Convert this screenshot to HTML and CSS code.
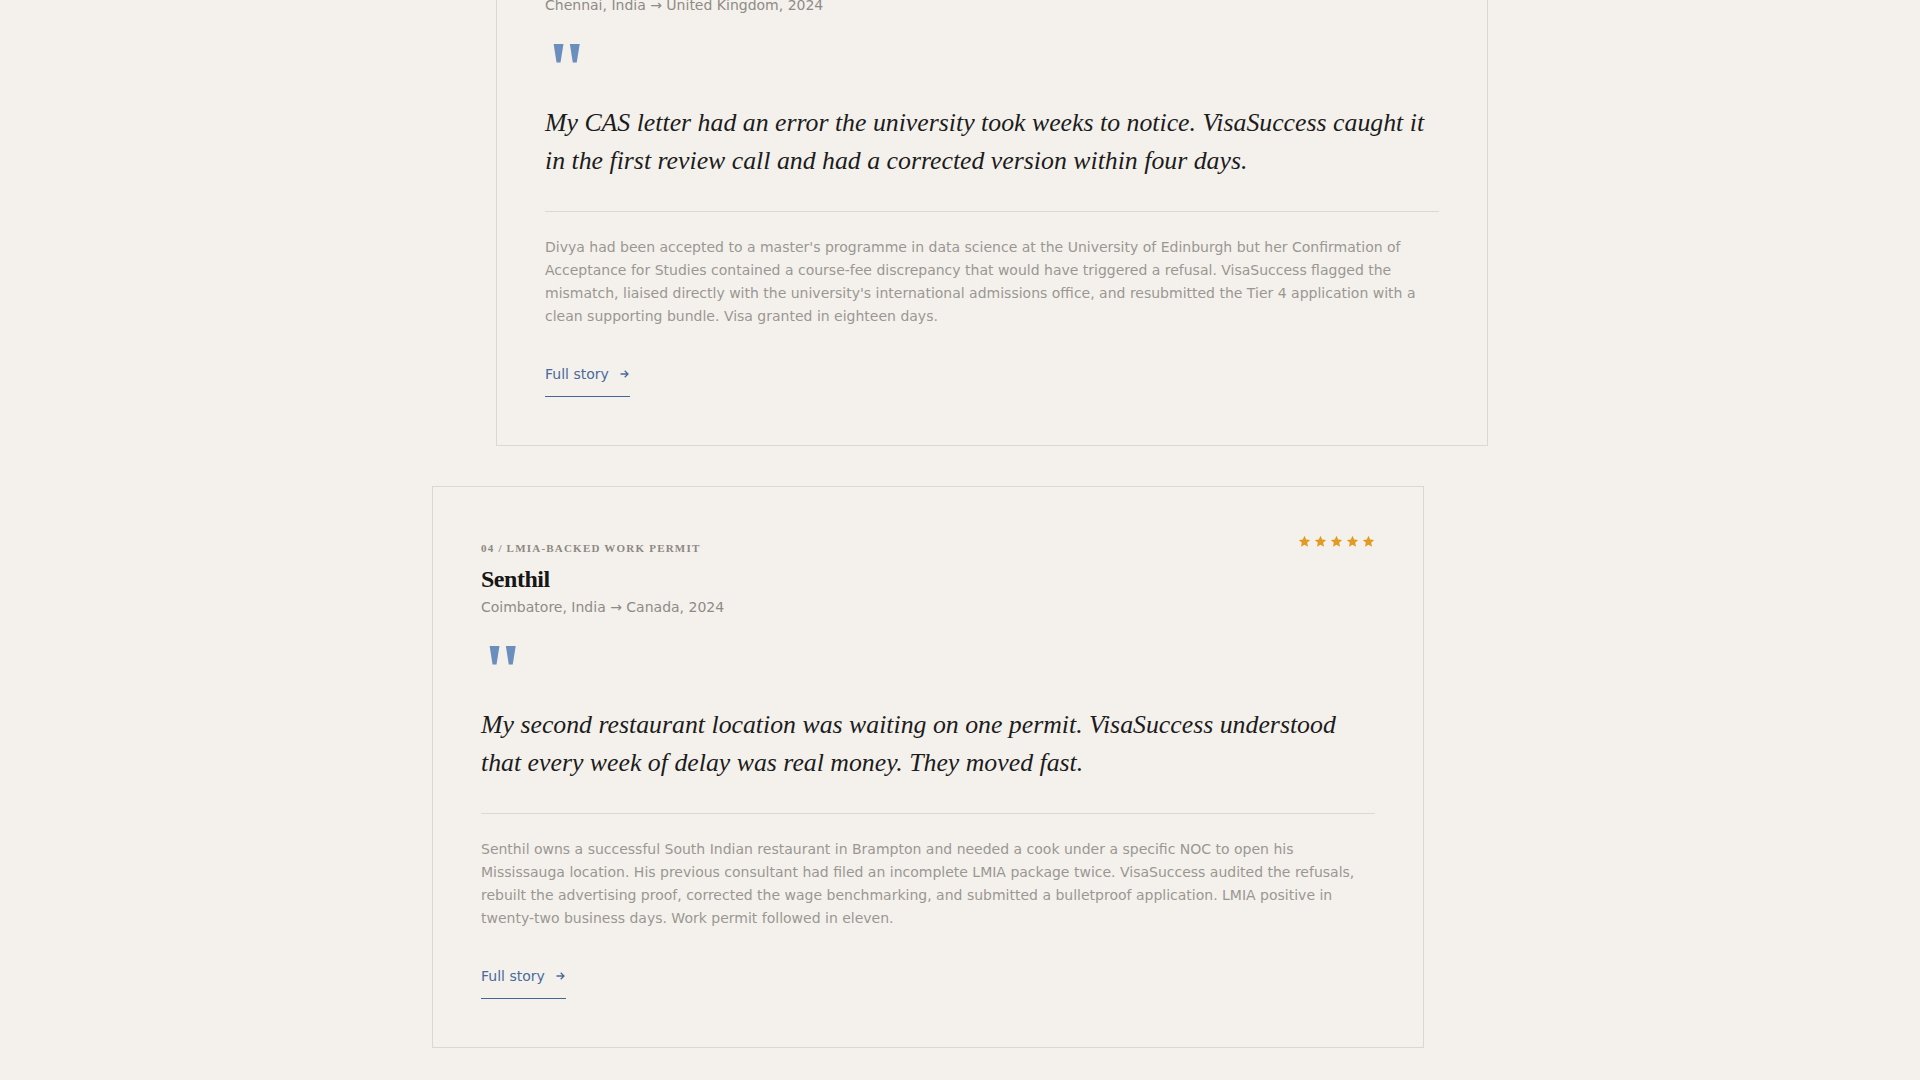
FILE: index.html
```html
<!DOCTYPE html>
<html>
<head>
  <meta charset="utf-8">
  <title>Client stories - VisaSuccess</title>

  <link rel="stylesheet" href="styles.css">

</head>

<body>

  <section class="stories">

    <article class="story">
      <div class="story-head">
        <div>
          <p class="eyebrow">03 / Tier 4 student visa</p>
          <h3 class="name">Divya</h3>
          <p class="route">Chennai, India &rarr; United Kingdom, 2024</p>
        </div>
        <div class="stars">
          <svg viewBox="0 0 24 24"><path d="M12 1.5l3.1 7 7.4.7-5.6 5 1.7 7.4L12 17.8l-6.6 3.8 1.7-7.4-5.6-5 7.4-.7z"/></svg>
          <svg viewBox="0 0 24 24"><path d="M12 1.5l3.1 7 7.4.7-5.6 5 1.7 7.4L12 17.8l-6.6 3.8 1.7-7.4-5.6-5 7.4-.7z"/></svg>
          <svg viewBox="0 0 24 24"><path d="M12 1.5l3.1 7 7.4.7-5.6 5 1.7 7.4L12 17.8l-6.6 3.8 1.7-7.4-5.6-5 7.4-.7z"/></svg>
          <svg viewBox="0 0 24 24"><path d="M12 1.5l3.1 7 7.4.7-5.6 5 1.7 7.4L12 17.8l-6.6 3.8 1.7-7.4-5.6-5 7.4-.7z"/></svg>
          <svg viewBox="0 0 24 24"><path d="M12 1.5l3.1 7 7.4.7-5.6 5 1.7 7.4L12 17.8l-6.6 3.8 1.7-7.4-5.6-5 7.4-.7z"/></svg>
        </div>
      </div>
      <div class="quote-mark">"</div>
      <blockquote class="quote">My CAS letter had an error the university took weeks to notice. VisaSuccess caught it in the first review call and had a corrected version within four days.</blockquote>
      <p class="summary">Divya had been accepted to a master's programme in data science at the University of Edinburgh but her Confirmation of Acceptance for Studies contained a course-fee discrepancy that would have triggered a refusal. VisaSuccess flagged the mismatch, liaised directly with the university's international admissions office, and resubmitted the Tier 4 application with a clean supporting bundle. Visa granted in eighteen days.</p>
      <a class="more" href="#">Full story <svg viewBox="0 0 10 10"><path d="M1 5h7.5M5.2 1.7L8.5 5 5.2 8.3"/></svg></a>
    </article>

    <article class="story">
      <div class="story-head">
        <div>
          <p class="eyebrow">04 / LMIA-backed work permit</p>
          <h3 class="name">Senthil</h3>
          <p class="route">Coimbatore, India &rarr; Canada, 2024</p>
        </div>
        <div class="stars">
          <svg viewBox="0 0 24 24"><path d="M12 1.5l3.1 7 7.4.7-5.6 5 1.7 7.4L12 17.8l-6.6 3.8 1.7-7.4-5.6-5 7.4-.7z"/></svg>
          <svg viewBox="0 0 24 24"><path d="M12 1.5l3.1 7 7.4.7-5.6 5 1.7 7.4L12 17.8l-6.6 3.8 1.7-7.4-5.6-5 7.4-.7z"/></svg>
          <svg viewBox="0 0 24 24"><path d="M12 1.5l3.1 7 7.4.7-5.6 5 1.7 7.4L12 17.8l-6.6 3.8 1.7-7.4-5.6-5 7.4-.7z"/></svg>
          <svg viewBox="0 0 24 24"><path d="M12 1.5l3.1 7 7.4.7-5.6 5 1.7 7.4L12 17.8l-6.6 3.8 1.7-7.4-5.6-5 7.4-.7z"/></svg>
          <svg viewBox="0 0 24 24"><path d="M12 1.5l3.1 7 7.4.7-5.6 5 1.7 7.4L12 17.8l-6.6 3.8 1.7-7.4-5.6-5 7.4-.7z"/></svg>
        </div>
      </div>
      <div class="quote-mark">"</div>
      <blockquote class="quote">My second restaurant location was waiting on one permit. VisaSuccess understood that every week of delay was real money. They moved fast.</blockquote>
      <p class="summary">Senthil owns a successful South Indian restaurant in Brampton and needed a cook under a specific NOC to open his Mississauga location. His previous consultant had filed an incomplete LMIA package twice. VisaSuccess audited the refusals, rebuilt the advertising proof, corrected the wage benchmarking, and submitted a bulletproof application. LMIA positive in twenty-two business days. Work permit followed in eleven.</p>
      <a class="more" href="#">Full story <svg viewBox="0 0 10 10"><path d="M1 5h7.5M5.2 1.7L8.5 5 5.2 8.3"/></svg></a>
    </article>

  </section>

</body>
</html>
```

FILE: styles.css
```css
body {
  margin: 0;
  background-color: #f4f1ec;
  font-family: 'DejaVu Sans', sans-serif;
  font-size: 14px;
  color: #1c1c1c;
}

/* staggered column of story cards (page is scrolled into the list) */
.stories {
  width: 1056px;
  margin: -116px auto 0;
  display: flex;
  flex-direction: column;
  gap: 40px;
}
.story {
  width: 992px;
  box-sizing: border-box;
  padding: 48px;
  border: 1px solid #dcd8d1;
}
.story:nth-child(odd) {
  margin-left: auto;
}

.story-head {
  display: flex;
  justify-content: space-between;
  align-items: flex-start;
}
.eyebrow {
  margin: 0;
  padding-top: 5px;
  font-family: 'Liberation Serif', serif;
  font-size: 11px;
  line-height: 16px;
  font-weight: bold;
  letter-spacing: 0.11em;
  text-transform: uppercase;
  color: #8c8883;
}
.name {
  margin: 9px 0 0;
  font-family: 'Liberation Serif', serif;
  font-size: 24px;
  line-height: 1.2;
  letter-spacing: -0.02em;
  color: #161616;
}
.route {
  margin: 3px 0 0;
  line-height: 21px;
  color: #8e8b87;
}
.stars {
  display: flex;
  gap: 3px;
}
.stars svg {
  width: 13px;
  height: 13px;
  fill: #e29a22;
}

.quote-mark {
  margin-top: 33px;
  height: 40px;
  font-family: 'Liberation Serif', serif;
  font-size: 78px;
  font-weight: bold;
  line-height: 40px;
  color: #6b8fbd;
}
.quote {
  margin: 15px 0 0;
  padding-bottom: 31px;
  border-bottom: 1px solid #dcd8d1;
  font-family: 'Liberation Serif', serif;
  font-style: italic;
  font-size: 25.8px;
  line-height: 38px;
  color: #1c1c1c;
}
.summary {
  margin: 24px 0 0;
  line-height: 23px;
  color: #9a9793;
}

.more {
  display: block;
  width: fit-content;
  margin-top: 36px;
  padding-bottom: 11px;
  border-bottom: 1px solid #44649a;
  line-height: 21px;
  color: #4a6a9c;
  text-decoration: none;
}
.more svg {
  width: 11px;
  height: 10px;
  margin-left: 6px;
  fill: none;
  stroke: #4a6a9c;
  stroke-width: 1.3;
}
```
